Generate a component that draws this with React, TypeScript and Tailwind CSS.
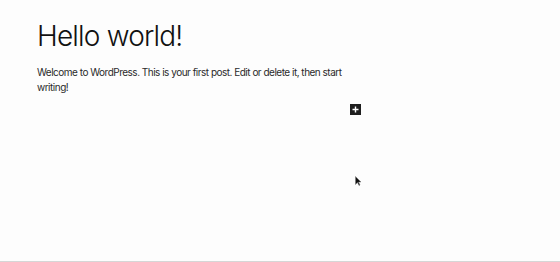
import React from 'react';

export default function App() {
  return (
    <div className="relative h-[262px] w-[560px] overflow-hidden border-b border-[#d6d6d6] bg-[#fdfdfd] font-['Inter','Liberation_Sans',sans-serif] text-[#1e1e1e]">
      <div className="pl-[37px] pt-[16px]">
        <h1 className="text-[28px] font-light leading-[40px] tracking-[-0.8px] text-[#111]">Hello world!</h1>
        <p className="mt-[9px] w-[320px] text-[10px] leading-[15px] tracking-[-0.5px] text-[#2a2a2a]">
          Welcome to WordPress. This is your first post. Edit or delete it, then start writing!
        </p>
        <div className="mt-[9px] flex w-[324px] justify-end">
          {/* block inserter */}
          <button className="flex h-[11px] w-[11px] items-center justify-center bg-[#1e1e1e]">
            <svg width="7" height="7" viewBox="0 0 7 7">
              <path d="M3.5 0.5v6M0.5 3.5h6" stroke="#fff" strokeWidth="1.4" />
            </svg>
          </button>
        </div>
      </div>

      {/* mouse cursor */}
      <svg className="absolute left-[355px] top-[176px]" width="6" height="10" viewBox="0 0 6 10">
        <path d="M0.5 0.5v8l2-2 1.5 3 1-0.5-1.5-3h2.5z" fill="#111" stroke="#777" strokeWidth="0.5" />
      </svg>
    </div>
  );
}
